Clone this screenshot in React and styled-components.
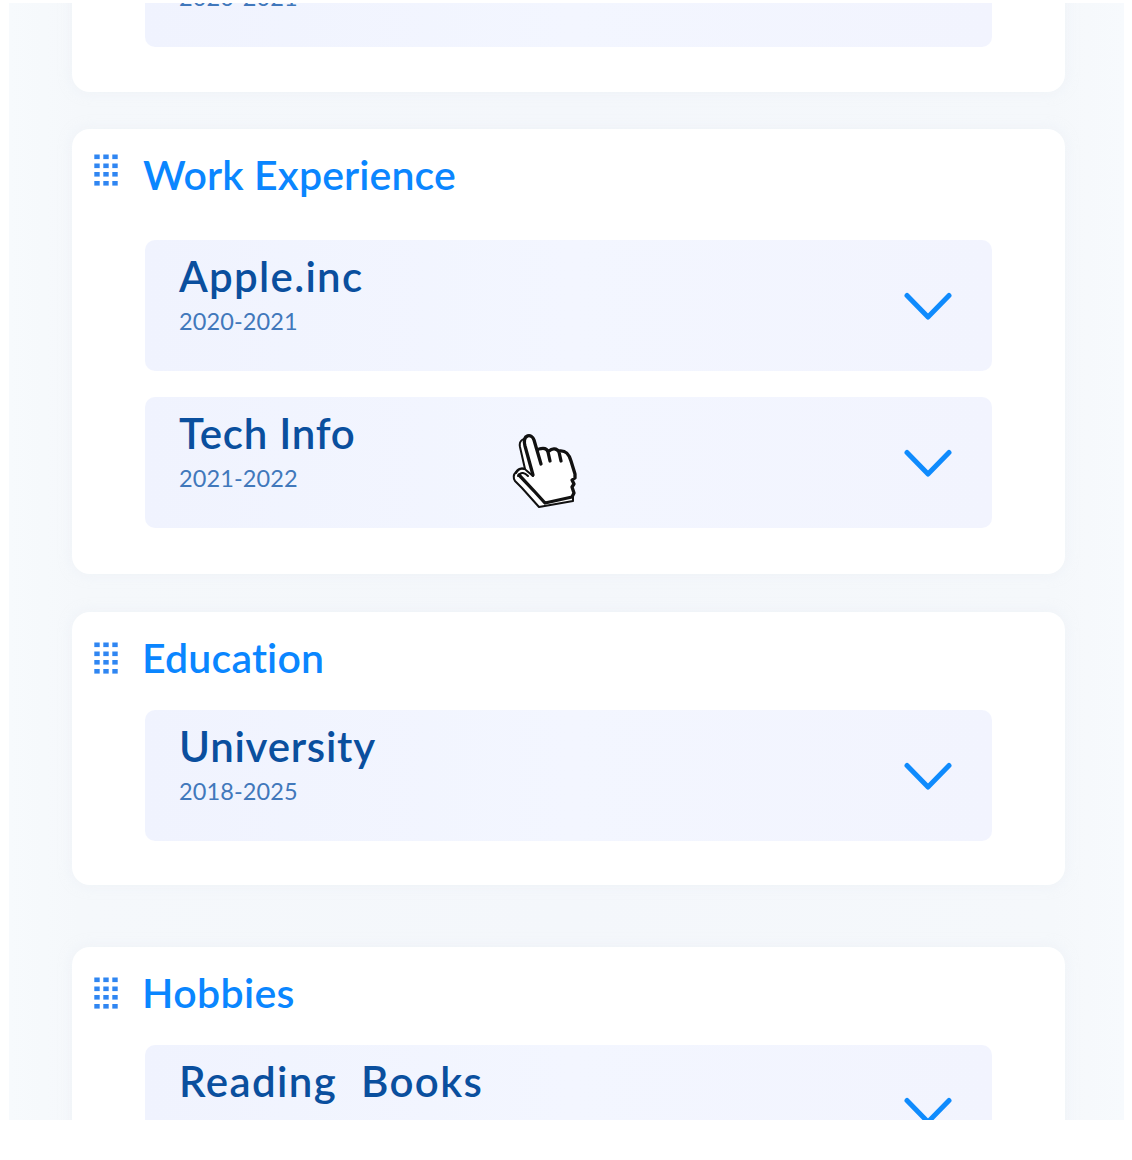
import React from "react";
import styled, { createGlobalStyle } from "styled-components";

const GlobalStyle = createGlobalStyle`
  * { box-sizing: border-box; }
  body {
    margin: 0;
    background: #fff;
    font-family: Lato, "Open Sans", sans-serif;
  }
`;

const Page = styled.main`
  height: 1160px;
  padding: 3px 8px 40px 9px;
  overflow: hidden;
`;

const Canvas = styled.div`
  height: 1117px;
  overflow: hidden;
  padding: 0 59px 0 63px;
  background: linear-gradient(90deg, #f7fafd 0, #f5f8fb 70px, #f4f7fb 50%, #f5f8fb 1045px, #f7fafd 100%);
`;

const Sections = styled.div`
  display: flex;
  flex-direction: column;
  margin-top: -199px;
`;

const Card = styled.section`
  height: ${(p) => p.$height}px;
  margin-bottom: ${(p) => p.$after}px;
  padding: 0 73px;
  border-radius: 18px;
  background: #fff;
  box-shadow: 0 0 14px rgba(226, 233, 242, 0.35);
  flex: none;
`;

const CardHeader = styled.header`
  display: flex;
  align-items: flex-start;
  height: ${(p) => p.$height}px;
  margin-left: -51px;
  padding-top: 25px;
`;

const Handle = styled.svg`
  width: 24px;
  height: 32px;
  margin: ${(p) => p.$offset}px 26px 0 0;
  flex: none;
  fill: #2f86f2;
`;

const Heading = styled.h2`
  margin: -4px 0 0 ${(p) => p.$shift}px;
  font-size: 41px;
  line-height: 50px;
  font-weight: 600;
  letter-spacing: ${(p) => p.$spacing}px;
  color: #0a86ff;
  white-space: pre;
`;

const Items = styled.div`
  display: flex;
  flex-direction: column;
  gap: 26px;
`;

const Item = styled.article`
  display: flex;
  justify-content: space-between;
  height: 131px;
  padding: 12px 40px 0 34px;
  border-radius: 10px;
  background: linear-gradient(90deg, #f0f3fe, #f3f6ff 50%, #f2f4fe);
`;

const ItemTitle = styled.h3`
  height: 50px;
  margin: -1px 0 0;
  font-size: 42px;
  line-height: 50px;
  font-weight: 600;
  letter-spacing: ${(p) => p.$spacing}px;
  color: #0a4f9e;
  white-space: pre;
`;

const Dates = styled.p`
  margin: 5px 0 0;
  font-size: 23.5px;
  line-height: 30px;
  letter-spacing: 0.12px;
  color: #4178bb;
`;

const Chevron = styled.svg`
  width: 48px;
  height: 28px;
  margin-top: 39.5px;
  flex: none;
  fill: none;
  stroke: #0f8bfd;
  stroke-width: 5;
  stroke-linecap: round;
  stroke-linejoin: round;
`;

const Pointer = styled.svg`
  position: absolute;
  left: 508px;
  top: 430px;
  width: 72px;
  height: 82px;
`;

const sections = [
  { id: "top", height: 288, after: 37, header: 112, items: [{ dates: "2020-2021" }] },
  {
    id: "work", name: "Work Experience", spacing: 0.12, shift: -1, height: 445, after: 38, header: 111, handle: 0,
    items: [
      { title: "Apple.inc", spacing: 1.3, dates: "2020-2021" },
      { title: "Tech Info", spacing: 0.75, dates: "2021-2022" },
    ],
  },
  {
    id: "education", name: "Education", spacing: 0.2, shift: -2, height: 273, after: 62, header: 98, handle: 5,
    items: [{ title: "University", spacing: 0.75, dates: "2018-2025" }],
  },
  {
    id: "hobbies", name: "Hobbies", spacing: 0.35, shift: -2, height: 273, after: 0, header: 98, handle: 5,
    items: [{ title: "Reading  Books", spacing: 1.4 }],
  },
];

function DragHandle({ offset }) {
  return (
    <Handle viewBox="0 0 24 32" $offset={offset} aria-hidden="true">
      {[0, 9, 18].map((x) =>
        [0.5, 9.5, 18, 27].map((y) => <rect key={`${x}-${y}`} x={x + 0.3} y={y} width="5.4" height="4.6" />)
      )}
    </Handle>
  );
}

function HandPointer() {
  return (
    <Pointer viewBox="0 0 72 82" fill="none" stroke="#111" strokeLinejoin="round" strokeLinecap="round" aria-hidden="true">
      <path
        d="M19 7 L14 10 Q11 12 12 17 L17 39 Q11 37 8 42 Q4 46 7 51 L14 58 L31 77 L65 71 L65 60 L40 30 Z"
        fill="#fff"
        strokeWidth="2"
      />
      <path
        d="M25 46 L17 16 C14 4 24 3 26 10 L33 20 L42 20 L52 21 C59 21 62 27 64 34 L67 45 L64 50 L66 54 L64 58 L66 64 L64 68 L37 73 L26 61 L11 47 L12 40 L18 40 Z"
        fill="#fff"
        stroke="none"
      />
      <path
        d="M25 45 L17 16 C14 4 24 3 26 10 L33 34 M31 19 C35 18 39 18 40 22 L42 31 M41 21 C44 18 49 18 51 22 L53 31 M51 21 C58 20 61 24 63 31 L67 44 M67 44 L67 48 L64 50 L66 54 L64 57 L66 63 L64 67 L37 73 L27 62 L11 45"
        strokeWidth="3.3"
      />
      <path d="M8 43 C11 38 16 37 19 41 L25 46 M10 46 C13 41 17 43 20 46" strokeWidth="2" />
    </Pointer>
  );
}

export default function App() {
  return (
    <>
      <GlobalStyle />
      <Page>
        <Canvas>
          <Sections>
            {sections.map((s) => (
              <Card key={s.id} $height={s.height} $after={s.after}>
                <CardHeader $height={s.header}>
                  {s.name && <DragHandle offset={s.handle} />}
                  {s.name && <Heading $spacing={s.spacing} $shift={s.shift}>{s.name}</Heading>}
                </CardHeader>
                <Items>
                  {s.items.map((item, i) => (
                    <Item key={i}>
                      <div>
                        <ItemTitle $spacing={item.spacing || 0}>{item.title}</ItemTitle>
                        {item.dates && <Dates>{item.dates}</Dates>}
                      </div>
                      <Chevron viewBox="0 0 48 28" aria-hidden="true">
                        <path d="M3 3.5 L24 25 L45 3.5" />
                      </Chevron>
                    </Item>
                  ))}
                </Items>
              </Card>
            ))}
          </Sections>
        </Canvas>
      </Page>
      <HandPointer />
    </>
  );
}
